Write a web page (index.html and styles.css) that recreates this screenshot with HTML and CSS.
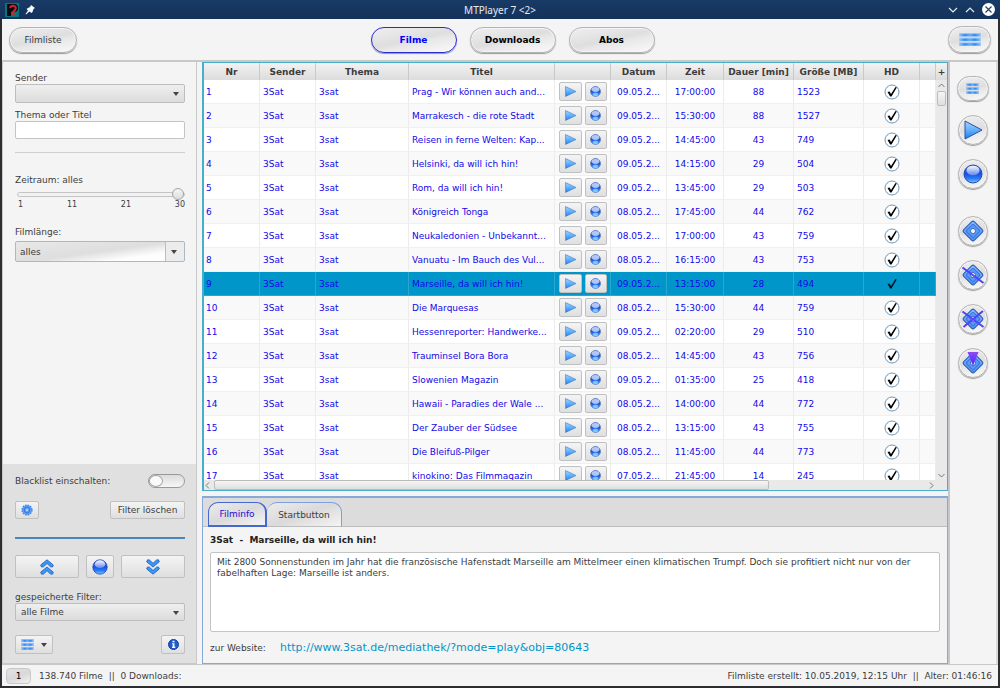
FILE: index.html
```html
<!DOCTYPE html>
<html lang="de">
<head>
<meta charset="utf-8">
<title>MTPlayer 7</title>
<link rel="stylesheet" href="styles.css">
</head>
<body>
<svg class="defs" width="0" height="0" aria-hidden="true">
  <defs>
    <linearGradient id="g-play" x1="0" y1="0" x2="0" y2="1"><stop offset="0" stop-color="#a6d4ff"/><stop offset=".5" stop-color="#62b0fa"/><stop offset="1" stop-color="#1e7cf0"/></linearGradient>
    <linearGradient id="g-ball" x1="0" y1="0" x2="0" y2="1"><stop offset="0" stop-color="#3a68e8"/><stop offset=".5" stop-color="#1a50e4"/><stop offset=".75" stop-color="#2a7cf4"/><stop offset="1" stop-color="#6cd0ff"/></linearGradient>
    <linearGradient id="g-shine" x1="0" y1="0" x2="0" y2="1"><stop offset="0" stop-color="#ffffff" stop-opacity=".95"/><stop offset="1" stop-color="#ffffff" stop-opacity=".3"/></linearGradient>
    <linearGradient id="g-bar" x1="0" y1="0" x2="1" y2="0"><stop offset="0" stop-color="#8abdf5"/><stop offset=".25" stop-color="#2f8af0"/><stop offset=".5" stop-color="#6aaef6"/><stop offset=".75" stop-color="#2f8af0"/><stop offset="1" stop-color="#8abdf5"/></linearGradient>
    <linearGradient id="g-diamond" x1="0" y1="0" x2="1" y2="1"><stop offset="0" stop-color="#8cc0ff"/><stop offset="1" stop-color="#4a90f4"/></linearGradient>
    <linearGradient id="g-arrow" x1="0" y1="0" x2="0" y2="1"><stop offset="0" stop-color="#8d4cf5"/><stop offset="1" stop-color="#4a28ff"/></linearGradient>
    <symbol id="play" viewBox="0 0 20 20"><path d="M2 1 19 10 2 19z" fill="url(#g-play)" stroke="#2a52a8" stroke-width="1" stroke-linejoin="round"/></symbol>
    <symbol id="ball" viewBox="0 0 20 20"><circle cx="10" cy="10" r="9" fill="url(#g-ball)" stroke="#2a44b0" stroke-width="1"/><ellipse cx="10" cy="6.500" rx="6.500" ry="4.800" fill="url(#g-shine)"/></symbol>
    <symbol id="miniball" viewBox="0 0 20 20"><circle cx="10" cy="10" r="9" fill="url(#g-ball)" stroke="#5580cc" stroke-width="1.500"/><ellipse cx="10" cy="6.500" rx="7" ry="4.500" fill="#fff" opacity=".65"/><ellipse cx="10" cy="15" rx="5" ry="3" fill="#9adcff" opacity=".7"/></symbol>
    <symbol id="miniplay" viewBox="0 0 20 20"><path d="M1 1 20 10 1 19z" fill="url(#g-play)" stroke="#4a80c8" stroke-width="1.200"/></symbol>
    <symbol id="bars" viewBox="0 0 22 14" preserveAspectRatio="none"><g fill="#a3c8f4"><rect y="0" width="22" height="4"/><rect y="5" width="22" height="4"/><rect y="10" width="22" height="4"/></g><g fill="url(#g-bar)"><rect x="1" y="1" width="20" height="2.500"/><rect x="1" y="6" width="20" height="2.500"/><rect x="1" y="11" width="20" height="2.500"/></g></symbol>
    <symbol id="diamond" viewBox="0 0 24 24"><rect x="4.500" y="4.500" width="15" height="15" rx="2" transform="rotate(45 12 12)" fill="url(#g-diamond)" stroke="#3060b8" stroke-width="1.200"/><rect x="7" y="7" width="10" height="10" rx="1" transform="rotate(45 12 12)" fill="#5c9cf6" stroke="#3d78dc" stroke-width="1.200"/><rect x="9.500" y="9.500" width="5" height="5" rx="2" transform="rotate(45 12 12)" fill="#f0f2f6" stroke="#3c70cc" stroke-width="1"/></symbol>
    <symbol id="check" viewBox="0 0 16 16"><circle cx="8" cy="8" r="7" fill="#fff" stroke="#6f94b8" stroke-width="1"/><path d="M3.500 8 5.500 7.500 7 10 11.500 3 12.800 3.500 7.500 12.500H6.200z" fill="#000"/></symbol>
    <symbol id="tick" viewBox="0 0 16 16"><path d="M3.500 8 5.500 7.500 7 10 11.500 3 12.800 3.500 7.500 12.500H6.200z" fill="#001824"/></symbol>
    <symbol id="chevrons" viewBox="0 0 14 16"><g fill="#3a98fa" stroke="#1a58b4" stroke-width=".8" stroke-linejoin="round"><path d="M7 .8 13.300 6 12.500 8 10.500 7.800 7 4.500 3.500 7.800 1.500 8 .7 6z"/><path d="M7 8 13.300 13.200 12.500 15.200 10.500 15 7 11.700 3.500 15 1.500 15.200.7 13.200z"/></g></symbol>
    <symbol id="gear" viewBox="0 0 16 16"><circle cx="8" cy="8" r="6.500" fill="#5a9bf4" stroke="#4285ea" stroke-width="2" stroke-dasharray="2.200 1.200"/><circle cx="8" cy="8" r="6" fill="#5f9ff5"/><circle cx="8" cy="8" r="3.800" fill="none" stroke="#2a6cdc"/><circle cx="8" cy="8" r="1.500" fill="#bcd8ff"/></symbol>
  </defs>
</svg>
<div class="window">
  <header class="titlebar">
    <div class="title-left">
      <svg width="14" height="14" viewBox="0 0 14 14"><rect width="14" height="14" fill="#0b7280"/><path d="M2 13V1h7q4 0 4 4t-4 4H6v4z" fill="#0a0a0f"/><path d="M5 5q1-3 4-2t1 4l-3 3" fill="none" stroke="#d8232c" stroke-width="2"/><path d="M7 11h4" stroke="#d8232c" stroke-width="1.500"/></svg>
      <svg width="10" height="10" viewBox="0 0 10 10"><path d="M6 0 10 3 8.500 4 7.500 7 6.500 8 4.500 6.500 1 9.500.5 9 3 5.500 1.500 4 3 3 5 2z" fill="#f4f8fc"/></svg>
    </div>
    <span>MTPlayer 7 &lt;2&gt;</span>
    <div class="title-right">
      <button aria-label="Minimieren"><svg width="10" height="8" viewBox="0 0 10 8"><path d="M1 2 5 6 9 2" fill="none" stroke="#e4eaf2" stroke-width="1.200"/></svg></button>
      <button aria-label="Maximieren"><svg width="10" height="8" viewBox="0 0 10 8"><path d="M1 6 5 2 9 6" fill="none" stroke="#e4eaf2" stroke-width="1.200"/></svg></button>
      <button aria-label="Schließen"><svg width="13" height="13" viewBox="0 0 13 13"><circle cx="6.500" cy="6.500" r="6.500" fill="#fff"/><path d="M3.500 3.500 9.500 9.500M9.500 3.500 3.500 9.500" stroke="#26425f" stroke-width="1.200"/></svg></button>
    </div>
  </header>

  <nav class="toolbar">
    <button class="pill pill-list">Filmliste</button>
    <div class="views">
      <button class="pill view active">Filme</button>
      <button class="pill view">Downloads</button>
      <button class="pill view">Abos</button>
    </div>
    <button class="pill pill-menu" aria-label="Menü"><svg width="22" height="13"><use href="#bars"/></svg></button>
  </nav>

  <main class="main">
    <aside class="filters">
      <section class="filter-top">
        <label for="sender">Sender</label>
        <div class="combo"><select id="sender"><option></option></select></div>
        <label class="theme-label" for="thema">Thema oder Titel</label>
        <input class="text" id="thema" type="text">
        <hr class="thin">
        <label for="zeit">Zeitraum: alles</label>
        <input class="slider" id="zeit" type="range" min="1" max="30" value="30">
        <div class="ticks"><span>1</span><span>11</span><span>21</span><span>30</span></div>
        <label class="len-label" for="laenge">Filmlänge:</label>
        <div class="combo editable"><select id="laenge"><option>alles</option></select></div>
      </section>
      <section class="filter-bottom">
        <div class="line blacklist"><label for="bl">Blacklist einschalten:</label><input class="toggle" id="bl" type="checkbox"></div>
        <div class="line"><button class="btn gear" aria-label="Einstellungen"><svg width="12" height="12"><use href="#gear"/></svg></button><button class="btn clear">Filter löschen</button></div>
        <hr class="thick">
        <div class="line nav-line">
          <button class="btn grow" aria-label="Filter laden"><svg width="14" height="16"><use href="#chevrons"/></svg></button>
          <button class="btn ball-btn" aria-label="Aktuelle Einstellung speichern"><svg width="16" height="16"><use href="#ball"/></svg></button>
          <button class="btn grow" aria-label="Filter speichern"><svg class="flip" width="14" height="16"><use href="#chevrons"/></svg></button>
        </div>
        <label for="saved">gespeicherte Filter:</label>
        <div class="combo saved"><select id="saved"><option>alle Filme</option></select></div>
        <div class="line last"><button class="btn menu-btn" aria-label="Filtermenü"><svg width="13" height="11"><use href="#bars"/></svg><i class="tri"></i></button><button class="btn info" aria-label="Hilfe"><svg width="11" height="11" viewBox="0 0 11 11"><circle cx="5.500" cy="5.500" r="5" fill="#1f5bd0" stroke="#173f9c"/><path d="M4.500 1.700h2v1.500h-2zM4 4.200h2.500v3.600h.8V9H4V7.800h.7V5.300H4z" fill="#fff"/></svg></button></div>
      </section>
    </aside>

    <div class="center">
      <div class="films">
        <div class="viewport">
          <table>
            <colgroup><col class="c-nr"><col class="c-s"><col class="c-th"><col><col class="c-s"><col class="c-s"><col class="c-z"><col class="c-d"><col class="c-d"><col class="c-s"><col class="c-x"></colgroup>
            <thead><tr><th>Nr</th><th>Sender</th><th>Thema</th><th>Titel</th><th></th><th>Datum</th><th>Zeit</th><th>Dauer [min]</th><th>Größe [MB]</th><th>HD</th><th></th></tr></thead>
            <tbody>
<tr><td>1</td><td>3Sat</td><td>3sat</td><td>Prag - Wir können auch and...</td><td><div class="acts"><button class="btn" aria-label="Abspielen"><svg><use href="#miniplay"/></svg></button><button class="btn" aria-label="Aufnehmen"><svg><use href="#miniball"/></svg></button></div></td><td>09.05.2...</td><td>17:00:00</td><td>88</td><td>1523</td><td><svg class="hd"><use href="#check"/></svg></td><td></td></tr>
<tr><td>2</td><td>3Sat</td><td>3sat</td><td>Marrakesch - die rote Stadt</td><td><div class="acts"><button class="btn" aria-label="Abspielen"><svg><use href="#miniplay"/></svg></button><button class="btn" aria-label="Aufnehmen"><svg><use href="#miniball"/></svg></button></div></td><td>09.05.2...</td><td>15:30:00</td><td>88</td><td>1527</td><td><svg class="hd"><use href="#check"/></svg></td><td></td></tr>
<tr><td>3</td><td>3Sat</td><td>3sat</td><td>Reisen in ferne Welten: Kap...</td><td><div class="acts"><button class="btn" aria-label="Abspielen"><svg><use href="#miniplay"/></svg></button><button class="btn" aria-label="Aufnehmen"><svg><use href="#miniball"/></svg></button></div></td><td>09.05.2...</td><td>14:45:00</td><td>43</td><td>749</td><td><svg class="hd"><use href="#check"/></svg></td><td></td></tr>
<tr><td>4</td><td>3Sat</td><td>3sat</td><td>Helsinki, da will ich hin!</td><td><div class="acts"><button class="btn" aria-label="Abspielen"><svg><use href="#miniplay"/></svg></button><button class="btn" aria-label="Aufnehmen"><svg><use href="#miniball"/></svg></button></div></td><td>09.05.2...</td><td>14:15:00</td><td>29</td><td>504</td><td><svg class="hd"><use href="#check"/></svg></td><td></td></tr>
<tr><td>5</td><td>3Sat</td><td>3sat</td><td>Rom, da will ich hin!</td><td><div class="acts"><button class="btn" aria-label="Abspielen"><svg><use href="#miniplay"/></svg></button><button class="btn" aria-label="Aufnehmen"><svg><use href="#miniball"/></svg></button></div></td><td>09.05.2...</td><td>13:45:00</td><td>29</td><td>503</td><td><svg class="hd"><use href="#check"/></svg></td><td></td></tr>
<tr><td>6</td><td>3Sat</td><td>3sat</td><td>Königreich Tonga</td><td><div class="acts"><button class="btn" aria-label="Abspielen"><svg><use href="#miniplay"/></svg></button><button class="btn" aria-label="Aufnehmen"><svg><use href="#miniball"/></svg></button></div></td><td>08.05.2...</td><td>17:45:00</td><td>44</td><td>762</td><td><svg class="hd"><use href="#check"/></svg></td><td></td></tr>
<tr><td>7</td><td>3Sat</td><td>3sat</td><td>Neukaledonien - Unbekannt...</td><td><div class="acts"><button class="btn" aria-label="Abspielen"><svg><use href="#miniplay"/></svg></button><button class="btn" aria-label="Aufnehmen"><svg><use href="#miniball"/></svg></button></div></td><td>08.05.2...</td><td>17:00:00</td><td>43</td><td>759</td><td><svg class="hd"><use href="#check"/></svg></td><td></td></tr>
<tr><td>8</td><td>3Sat</td><td>3sat</td><td>Vanuatu - Im Bauch des Vul...</td><td><div class="acts"><button class="btn" aria-label="Abspielen"><svg><use href="#miniplay"/></svg></button><button class="btn" aria-label="Aufnehmen"><svg><use href="#miniball"/></svg></button></div></td><td>08.05.2...</td><td>16:15:00</td><td>43</td><td>753</td><td><svg class="hd"><use href="#check"/></svg></td><td></td></tr>
<tr class="selected"><td>9</td><td>3Sat</td><td>3sat</td><td>Marseille, da will ich hin!</td><td><div class="acts"><button class="btn" aria-label="Abspielen"><svg><use href="#miniplay"/></svg></button><button class="btn" aria-label="Aufnehmen"><svg><use href="#miniball"/></svg></button></div></td><td>09.05.2...</td><td>13:15:00</td><td>28</td><td>494</td><td><svg class="hd"><use href="#tick"/></svg></td><td></td></tr>
<tr><td>10</td><td>3Sat</td><td>3sat</td><td>Die Marquesas</td><td><div class="acts"><button class="btn" aria-label="Abspielen"><svg><use href="#miniplay"/></svg></button><button class="btn" aria-label="Aufnehmen"><svg><use href="#miniball"/></svg></button></div></td><td>08.05.2...</td><td>15:30:00</td><td>44</td><td>759</td><td><svg class="hd"><use href="#check"/></svg></td><td></td></tr>
<tr><td>11</td><td>3Sat</td><td>3sat</td><td>Hessenreporter: Handwerke...</td><td><div class="acts"><button class="btn" aria-label="Abspielen"><svg><use href="#miniplay"/></svg></button><button class="btn" aria-label="Aufnehmen"><svg><use href="#miniball"/></svg></button></div></td><td>09.05.2...</td><td>02:20:00</td><td>29</td><td>510</td><td><svg class="hd"><use href="#check"/></svg></td><td></td></tr>
<tr><td>12</td><td>3Sat</td><td>3sat</td><td>Trauminsel Bora Bora</td><td><div class="acts"><button class="btn" aria-label="Abspielen"><svg><use href="#miniplay"/></svg></button><button class="btn" aria-label="Aufnehmen"><svg><use href="#miniball"/></svg></button></div></td><td>08.05.2...</td><td>14:45:00</td><td>43</td><td>756</td><td><svg class="hd"><use href="#check"/></svg></td><td></td></tr>
<tr><td>13</td><td>3Sat</td><td>3sat</td><td>Slowenien Magazin</td><td><div class="acts"><button class="btn" aria-label="Abspielen"><svg><use href="#miniplay"/></svg></button><button class="btn" aria-label="Aufnehmen"><svg><use href="#miniball"/></svg></button></div></td><td>09.05.2...</td><td>01:35:00</td><td>25</td><td>418</td><td><svg class="hd"><use href="#check"/></svg></td><td></td></tr>
<tr><td>14</td><td>3Sat</td><td>3sat</td><td>Hawaii - Paradies der Wale ...</td><td><div class="acts"><button class="btn" aria-label="Abspielen"><svg><use href="#miniplay"/></svg></button><button class="btn" aria-label="Aufnehmen"><svg><use href="#miniball"/></svg></button></div></td><td>08.05.2...</td><td>14:00:00</td><td>44</td><td>772</td><td><svg class="hd"><use href="#check"/></svg></td><td></td></tr>
<tr><td>15</td><td>3Sat</td><td>3sat</td><td>Der Zauber der Südsee</td><td><div class="acts"><button class="btn" aria-label="Abspielen"><svg><use href="#miniplay"/></svg></button><button class="btn" aria-label="Aufnehmen"><svg><use href="#miniball"/></svg></button></div></td><td>08.05.2...</td><td>13:15:00</td><td>43</td><td>755</td><td><svg class="hd"><use href="#check"/></svg></td><td></td></tr>
<tr><td>16</td><td>3Sat</td><td>3sat</td><td>Die Bleifuß-Pilger</td><td><div class="acts"><button class="btn" aria-label="Abspielen"><svg><use href="#miniplay"/></svg></button><button class="btn" aria-label="Aufnehmen"><svg><use href="#miniball"/></svg></button></div></td><td>08.05.2...</td><td>11:45:00</td><td>44</td><td>773</td><td><svg class="hd"><use href="#check"/></svg></td><td></td></tr>
<tr><td>17</td><td>3Sat</td><td>3sat</td><td>kinokino: Das Filmmagazin</td><td><div class="acts"><button class="btn" aria-label="Abspielen"><svg><use href="#miniplay"/></svg></button><button class="btn" aria-label="Aufnehmen"><svg><use href="#miniball"/></svg></button></div></td><td>07.05.2...</td><td>21:45:00</td><td>14</td><td>245</td><td><svg class="hd"><use href="#check"/></svg></td><td></td></tr>
            </tbody>
          </table>
        </div>
        <div class="vside">
          <button class="plus" aria-label="Spalten">+</button>
          <div class="vbar">
            <svg width="7" height="5" viewBox="0 0 7 5"><path d="M.5 4 3.500 1 6.500 4" fill="none" stroke="#777"/></svg>
            <i class="vthumb"></i>
            <svg class="flip" width="7" height="5" viewBox="0 0 7 5"><path d="M.5 4 3.500 1 6.500 4" fill="none" stroke="#777"/></svg>
          </div>
        </div>
        <div class="hbar">
          <svg width="5" height="7" viewBox="0 0 5 7"><path d="M4 .5 1 3.500 4 6.500" fill="none" stroke="#777"/></svg>
          <div class="htrack"><i class="hthumb"></i></div>
          <svg width="5" height="7" viewBox="0 0 5 7"><path d="M1 .5 4 3.500 1 6.500" fill="none" stroke="#777"/></svg>
        </div>
      </div>

      <section class="details">
        <div class="tabs" role="tablist">
          <button class="tab on" role="tab" aria-selected="true">Filminfo</button>
          <button class="tab second" role="tab" aria-selected="false">Startbutton</button>
        </div>
        <div class="detail-body">
          <h2>3Sat&nbsp; -&nbsp; Marseille, da will ich hin!</h2>
          <textarea aria-label="Beschreibung">Mit 2800 Sonnenstunden im Jahr hat die französische Hafenstadt Marseille am Mittelmeer einen klimatischen Trumpf. Doch sie profitiert nicht nur von der fabelhaften Lage: Marseille ist anders.</textarea>
          <div class="site"><span>zur Website:</span><a href="http://www.3sat.de/mediathek/?mode=play&amp;obj=80643">http://www.3sat.de/mediathek/?mode=play&amp;obj=80643</a></div>
        </div>
      </section>
    </div>

    <aside class="tools">
      <button class="pill oval" aria-label="Filmmenü"><svg width="13" height="11"><use href="#bars"/></svg></button>
      <button class="pill round" aria-label="Abspielen"><svg width="20" height="20"><use href="#play"/></svg></button>
      <button class="pill round" aria-label="Aufnehmen"><svg width="20" height="20"><use href="#ball"/></svg></button>
      <button class="pill round split" aria-label="Markieren"><svg width="24" height="24"><use href="#diamond"/></svg></button>
      <button class="pill round" aria-label="Markierung aufheben"><svg width="24" height="24" viewBox="0 0 24 24"><use href="#diamond"/><path d="M1.500 4.500 22.500 20" stroke="#5540f8" stroke-width="2"/></svg></button>
      <button class="pill round" aria-label="Alle aufheben"><svg width="24" height="24" viewBox="0 0 24 24"><use href="#diamond"/><path d="M1.500 4.500 22.500 20M22 4 2.500 20" stroke="#5540f8" stroke-width="2"/></svg></button>
      <button class="pill round" aria-label="Markierte laden"><svg width="24" height="24" viewBox="0 0 24 24"><use href="#diamond"/><path d="M6.500 1h11L12 15z" fill="url(#g-arrow)"/></svg></button>
    </aside>
  </main>

  <footer class="status">
    <button class="count">1</button>
    <span>138.740 Filme&nbsp; ||&nbsp; 0 Downloads:</span>
    <span class="age">Filmliste erstellt: 10.05.2019, 12:15 Uhr&nbsp; ||&nbsp; Alter: 01:46:16</span>
  </footer>
</div>
</body>
</html>
```
FILE: styles.css
```css
* { box-sizing: border-box; }

body {
  margin: 0;
  background: #2b2d30;
  color: #3c3c3c;
  font: 9px/12px "DejaVu Sans", sans-serif;
}

button, input, select, textarea { font: inherit; color: inherit; margin: 0; }
button { display: flex; align-items: center; justify-content: center; padding: 0; }
svg { display: block; flex: none; }
.defs { position: absolute; }
.flip { transform: scaleY(-1); }

.window { display: flex; flex-direction: column; height: 100vh; padding: 0 2px 2px; }

/* Title bar */
.titlebar {
  flex: none;
  display: flex;
  align-items: center;
  justify-content: space-between;
  height: 19px;
  margin: 0 -2px;
  padding: 0 5px;
  background: linear-gradient(#183b66, #14315a);
  color: #e6ebf2;
  font: 10px/14px "Noto Sans", sans-serif;
}
.title-left, .title-right { display: flex; align-items: center; width: 46px; gap: 6px; }
.title-right { justify-content: flex-end; gap: 7px; }
.title-right button { border: 0; background: none; }

/* Glossy buttons */
.pill {
  border: 1px solid #b4b4b4;
  border-radius: 14px;
  background: linear-gradient(168deg, #f0f0f0 0%, #dedede 48%, #e8e8e8 60%, #fafafa 100%);
  box-shadow: 0 1px 1px #9a9a9a, inset 0 0 0 1px #f4f4f4;
}

.toolbar {
  flex: none;
  display: flex;
  align-items: center;
  justify-content: space-between;
  height: 43px;
  padding: 0 7px;
  background: #f4f4f4;
  border-bottom: 2px solid #c8c8c8;
}
.pill-list { width: 68px; height: 26px; }
.views { display: flex; gap: 13px; }
.view { width: 86px; height: 26px; color: #000; font-weight: bold; }
.view.active { color: #00f; border-color: #2a2ad0; box-shadow: 0 1px 1px #9090d8; }
.pill-menu { width: 43px; height: 27px; }

.main { flex: 1; min-height: 0; display: flex; background: #f4f4f4; }

/* Filter column */
.filters {
  flex: none;
  display: flex;
  flex-direction: column;
  width: 195px;
  border: 1px solid #c8c8c8;
  border-width: 0 1px 1px;
}
.filter-top, .filter-bottom { display: flex; flex-direction: column; padding: 0 11px 0 12px; }
.filter-top { flex: 1; padding-top: 10px; }
.filter-bottom { background: #e0e0e0; padding-top: 10px; padding-bottom: 9px; }

.combo { position: relative; height: 19px; }
.combo select {
  appearance: none;
  display: block;
  width: 100%;
  height: 100%;
  padding: 0 5px;
  border: 1px solid #bdbdbd;
  border-radius: 2px;
  background: linear-gradient(#efefef, #dcdcdc);
}
.combo::after, .tri {
  content: "";
  border: 3px solid transparent;
  border-top: 4px solid #444;
  border-bottom: 0;
}
.combo::after { position: absolute; right: 6px; top: 8px; pointer-events: none; }
.combo.editable { height: 21px; }
.combo.editable select {
  padding: 0 4px;
  border-color: #a9bac6;
  background:
    linear-gradient(90deg, transparent 149px, #bdbdbd 149px, #bdbdbd 150px, #ececec 150px),
    linear-gradient(172deg, #e8e8e8, #dedede 50%, #fdfdfd 75%);
}
.combo.editable::after { right: 8px; top: 9px; }
.theme-label { margin-top: 6px; }
.text {
  width: 100%;
  height: 18px;
  padding: 0 5px;
  border: 1px solid #c4c4c4;
  border-radius: 2px;
  background: #fff;
}
.thin { width: 100%; margin: 13px 0 21px; border: 0; border-top: 1px solid #cfcfcf; }
.slider {
  appearance: none;
  width: calc(100% - 2px);
  height: 12px;
  margin: 2px 0 0 2px;
  background: none;
}
.slider::-webkit-slider-runnable-track {
  height: 5px;
  border: 1px solid #c4c4c4;
  border-radius: 3px;
  background: #f2f2f2;
}
.slider::-webkit-slider-thumb {
  appearance: none;
  width: 12px;
  height: 12px;
  margin-top: -5px;
  border: 1px solid #a4a4a4;
  border-radius: 50%;
  background: linear-gradient(#f4f4f4, #dedede);
}
.ticks { display: flex; justify-content: space-between; padding-left: 3px; font-size: 8px; line-height: 10px; }
.len-label { margin-top: 16px; margin-bottom: 3px; }

.btn {
  border: 1px solid #c0c0c0;
  border-radius: 2px;
  background: linear-gradient(#f4f4f4, #dfdfdf);
}
.line { display: flex; align-items: center; justify-content: space-between; }
.toggle {
  appearance: none;
  display: flex;
  width: 37px;
  height: 14px;
  border: 1px solid #999;
  border-radius: 7px;
  background: linear-gradient(#dcdcdc, #f6f6f6);
}
.toggle::before { content: ""; width: 12px; border-radius: 50%; background: #fafafa; border: 1px solid #a4a4a4; }
.blacklist { margin-bottom: 13px; }
.gear { width: 24px; height: 18px; }
.clear { width: 75px; height: 18px; }
.thick { width: 100%; margin: 18px 0 16px; border: 0; border-top: 2px solid #4a86b8; }
.nav-line { gap: 7px; margin-bottom: 13px; }
.grow { flex: 1; height: 23px; }
.ball-btn { width: 28px; height: 23px; }
.combo.saved { height: 18px; }
.last { margin-top: 14px; }
.menu-btn { width: 38px; height: 19px; gap: 7px; }
.info { width: 24px; height: 19px; }

/* Film table */
.center {
  flex: 1;
  min-width: 0;
  display: flex;
  flex-direction: column;
  gap: 5px;
  margin-left: 5px;
  border-right: 2px solid #c6c6cc;
}
.films {
  flex: 1;
  min-height: 0;
  display: grid;
  grid-template: minmax(0, 1fr) 10px / minmax(0, 1fr) 11px;
  border: 1px solid #45b0cc;
  border-width: 1px 1px 1px 2px;
  background: #e9e9e9;
}
.viewport { overflow: hidden; background: #fff; }
table { width: 100%; table-layout: fixed; border-collapse: separate; border-spacing: 0; }
.c-nr { width: 56px; }
.c-s { width: 56px; }
.c-th { width: 93px; }
.c-z { width: 57px; }
.c-d { width: 70px; }
.c-x { width: 16px; }
th {
  height: 17px;
  padding: 0;
  border-right: 1px solid #c9c9c9;
  background: linear-gradient(#f2f2f2, #dcdcdc);
  white-space: nowrap;
}
td {
  height: 24px;
  padding: 0 3px;
  border-right: 1px solid #ececec;
  border-bottom: 1px solid #f0f0f0;
  color: #1408e8;
  white-space: nowrap;
  overflow: hidden;
}
td:first-child { padding-left: 2px; }
tr:nth-child(even) td { background: #f9f9f9; }
td:nth-child(6) { padding-left: 6px; }
td:nth-child(7), td:nth-child(8) { text-align: center; }
tr.selected td { background: #0096c9; border-color: #2ba6d0; }
.acts { display: flex; gap: 3px; padding-left: 1px; }
.acts .btn { width: 23px; height: 19px; }
.acts svg { width: 11px; height: 11px; }
.hd { width: 16px; height: 16px; margin: 0 auto; }

.vside { display: flex; flex-direction: column; }
.plus { height: 17px; border: 0; background: linear-gradient(#f2f2f2, #dcdcdc); font-weight: bold; line-height: 14px; }
.vbar { flex: 1; display: flex; flex-direction: column; align-items: center; padding: 3px 0 2px; }
.vbar .flip { margin-top: auto; }
.vthumb, .hthumb { border: 1px solid #bcbcbc; border-radius: 2px; background: linear-gradient(#f6f6f6, #dedede); }
.vthumb { width: 9px; height: 15px; margin-top: 3px; }
.hbar { grid-column: 1; display: flex; align-items: center; gap: 4px; padding: 0 2px 0 1px; }
.htrack { flex: 1; display: flex; height: 10px; }
.hthumb { width: 78%; }

/* Film information */
.details {
  flex: none;
  display: flex;
  flex-direction: column;
  height: 168px;
  border: 1px solid #88a8d8;
  border-width: 2px 1px 1px;
}
.tabs {
  flex: none;
  display: flex;
  align-items: flex-end;
  height: 29px;
  padding-left: 5px;
  background: #dcdcdc;
  border-bottom: 1px solid #bdbdbd;
}
.tab {
  height: 25px;
  width: 75px;
  margin-bottom: -1px;
  border: 1px solid #7d9fe0;
  border-radius: 10px 10px 0 0;
  background: linear-gradient(160deg, #ececec, #dadada 50%, #f4f4f4);
}
.tab.on { width: 59px; border: 2px solid #4468d0; border-width: 1px 2px 2px 1px; color: #1a10d8; }
.tab.second { border-left-width: 0; border-bottom-color: #bdbdbd; }
.detail-body { flex: 1; display: flex; flex-direction: column; padding: 7px 7px 9px; }
h2 { margin: 0 0 6px; font-size: 9px; line-height: 12px; color: #222; }
textarea {
  flex: 1;
  resize: none;
  padding: 4px 6px;
  border: 1px solid #c4c4c4;
  border-radius: 2px;
  background: #fff;
  line-height: 11px;
  overflow: hidden;
  outline: 0;
}
.site { display: flex; align-items: center; gap: 14px; margin-top: 10px; }
.site a { color: #0096c9; font-size: 11px; text-decoration: none; }

/* Right tool column */
.tools { flex: none; width: 48px; display: flex; flex-direction: column; align-items: center; gap: 14px; padding: 14px 1px 0 0; border-right: 2px solid #dadada; }
.oval { width: 32px; height: 25px; }
.round { width: 30px; height: 30px; border-radius: 50%; }
.split { margin-top: 13px; }

.status {
  flex: none;
  display: flex;
  align-items: center;
  gap: 8px;
  height: 22px;
  padding: 0 6px 0 4px;
  border-top: 1px solid #c8c8c8;
  background: #f4f4f4;
}
.count { width: 25px; height: 16px; border: 1px solid #c8c8c8; border-radius: 4px; background: linear-gradient(160deg, #e4e4e4, #d8d8d8 50%, #f2f2f2); color: #000; }
.age { margin-left: auto; }
```
